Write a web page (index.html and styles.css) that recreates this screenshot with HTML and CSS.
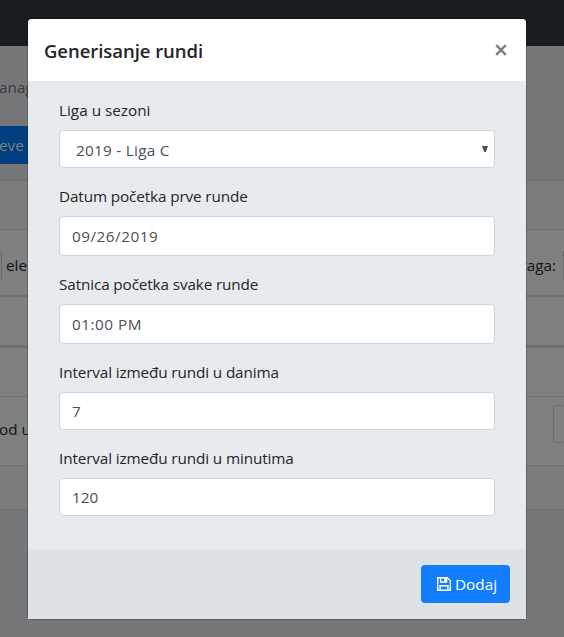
FILE: index.html
```html
<!DOCTYPE html>
<html lang="sr">
<head>
<meta charset="utf-8">
<title>Generisanje rundi</title>
<link rel="stylesheet" href="styles.css">
</head>
<body>
<div class="page">
  <div class="navbar"></div>
  <div class="crumb"><span class="t-anag">anag</span></div>
  <div class="actions"><span class="action"><span class="t-eve">eve</span></span></div>
  <div class="card-head"></div>
  <div class="toolbar">
    <span class="count-box"></span><span class="t-ele">ele</span>
    <span class="t-raga">raga:</span><span class="search-box"></span>
  </div>
  <div class="row thick2"></div>
  <div class="row thick3"></div>
  <div class="pager"><span class="t-od">od u</span><span class="page-box"></span></div>
  <div class="card-foot"></div>
</div>
<div class="modal">
  <header class="modal-header">
    <h5 class="title"><span class="t-title">Generisanje rundi</span></h5>
    <svg class="close" viewBox="0 0 12 12"><path d="M1.2 1.2 10.8 10.8M10.8 1.2 1.2 10.8"/></svg>
  </header>
  <main class="modal-body">
    <div class="group"><label><span class="t-l1">Liga u sezoni</span></label>
      <div class="control select"><span class="t-v1">2019 - Liga C</span><svg class="caret" viewBox="0 0 6 6"><path d="M0 0H6L3.8 6H2.2Z"/></svg></div></div>
    <div class="group"><label><span class="t-l2">Datum početka prve runde</span></label>
      <div class="control tall"><span class="t-v2">09/26/2019</span></div></div>
    <div class="group"><label><span class="t-l3">Satnica početka svake runde</span></label>
      <div class="control tall"><span class="t-v3">01:00 PM</span></div></div>
    <div class="group"><label><span class="t-l4">Interval između rundi u danima</span></label>
      <div class="control"><span class="t-v4">7</span></div></div>
    <div class="group"><label><span class="t-l5">Interval između rundi u minutima</span></label>
      <div class="control"><span class="t-v5">120</span></div></div>
  </main>
  <footer class="modal-footer">
    <div class="btn">
      <svg class="save" viewBox="0 0 14 14"><path d="M.7.7H10.2L13.3 3.8V13.3H.7ZM3.6.7V5H9.6V.7M3.1 13.3V8.7H10.9V13.3"/><path class="fill" d="M7.1 1.2H9V4.2H7.1Z"/></svg>
      <span class="t-btn">Dodaj</span>
    </div>
  </footer>
</div>
</body>
</html>
```
FILE: styles.css
```css
* { box-sizing: border-box; }
body {
  margin: 0;
  width: 564px;
  height: 637px;
  overflow: hidden;
  position: relative;
  background: #767779;
  font: 15.3px/24px "Open Sans", "Noto Sans", sans-serif;
  color: #212529;
}
span { white-space: nowrap; }
.page { color: #111315; }
.navbar { height: 46px; background: #1a1d20; }
.crumb { height: 80px; padding-top: 29px; color: #36393d; }
.crumb span { margin-left: -1px; }
.actions { height: 54px; }
.action { display: block; width: 60px; height: 38px; padding-top: 7px; background: #003e80; color: #808080; }
.t-eve { margin-left: -1px; }
.card-head { height: 50px; background: #7c7c7c; border-top: 1px solid #6d6e70; border-bottom: 1px solid #6c6c6c; }
.toolbar { height: 65px; background: #808080; display: flex; align-items: center; padding-top: 5px; }
.count-box { width: 2px; height: 30px; border-right: 1px solid #6a6a6a; border-radius: 0 3px 3px 0; margin-right: 4px; }
.t-raga { margin-left: auto; margin-right: 7px; }
.search-box { width: 1px; height: 29px; background: #6a6a6a; }
.row { background: #808080; }
.thick2 { height: 50px; border-top: 2px solid #6f7071; }
.thick3 { height: 51px; border-top: 3px solid #6f7071; }
.pager { height: 69px; background: #808080; border-top: 1px solid #6f7071; display: flex; justify-content: space-between; }
.t-od { margin: 20px 0 0 -1px; }
.page-box { width: 11px; height: 38px; margin-top: 8px; border: 1px solid #6f7071; border-right: 0; border-radius: 4px 0 0 4px; }
.card-foot { height: 45px; background: #7c7c7c; border-top: 1px solid #6c6c6c; border-bottom: 1px solid #707070; }

.modal {
  position: absolute;
  left: 27px;
  top: 18px;
  width: 500px;
  height: 602px;
  display: flex;
  flex-direction: column;
  border: 1px solid rgba(0, 0, 0, .2);
  border-radius: 5px;
  background: #e9ecef;
  background-clip: padding-box;
}
.modal-header {
  height: 62px;
  padding: 0 19px 0 16px;
  display: flex;
  align-items: center;
  justify-content: space-between;
  background: #fff;
  border-radius: 4px 4px 0 0;
}
.title { margin: 2px 0 0; font-size: 18.5px; line-height: 30px; font-weight: 600; letter-spacing: -.05px; }
.close { width: 12px; height: 12px; fill: none; stroke: #7f7f7f; stroke-width: 2.5; }
.modal-body { flex: 1; padding: 17px 31px 0; background: #e8ebee; }
.group { margin-bottom: 16px; }
label { display: block; height: 24px; margin-bottom: 8px; letter-spacing: -.13px; }
.t-l1 { letter-spacing: 0; }
.control {
  height: 38px;
  padding: 0 12px;
  display: flex;
  align-items: center;
  background: #fff;
  border: 1px solid #ced4da;
  border-radius: 4px;
  color: #495057;
}
.tall { height: 40px; }
.t-v1 { letter-spacing: .27px; }
.t-v2, .t-v3 { letter-spacing: .5px; }
.select { padding: 2px 6px 0 16px; justify-content: space-between; }
.caret { width: 6px; height: 6px; margin-top: -3px; fill: #495057; }
.modal-footer { height: 70px; padding: 16px; display: flex; justify-content: flex-end; background: #dee1e6; }
.btn {
  width: 89px;
  height: 38px;
  padding-left: 16px;
  display: flex;
  align-items: center;
  gap: 4px;
  background: #127eff;
  color: #fff;
  border-radius: 4px;
}
.save { width: 14px; height: 14px; fill: none; stroke: #fff; stroke-width: 1.4; }
.save .fill { fill: #fff; stroke: none; }
```
